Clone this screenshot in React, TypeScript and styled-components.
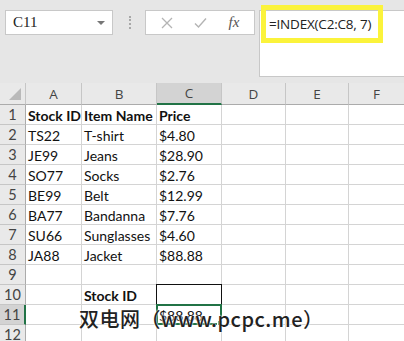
import * as React from "react";
import styled, { createGlobalStyle } from "styled-components";

const GlobalStyle = createGlobalStyle`
  html, body {
    margin: 0;
    padding: 0;
    background: #e6e6e6;
  }
`;

const Page = styled.div`
  position: relative;
  width: 404px;
  height: 341px;
  overflow: hidden;
  background: #e6e6e6;
  font-family: Lato, "Liberation Sans", sans-serif;
`;

const TopBar = styled.div`
  display: flex;
  align-items: flex-start;
  height: 75px;
  padding: 10px 0 0 5px;
  box-sizing: border-box;
`;

const NameBox = styled.div`
  position: relative;
  width: 108px;
  height: 25px;
  box-sizing: border-box;
  background: #fff;
  border: 1px solid #c8c8c8;
  display: flex;
  align-items: center;
  padding-left: 7px;
  font-family: "Liberation Serif", serif;
  font-size: 15px;
  color: #222;
`;

const DropArrow = styled.span`
  position: absolute;
  right: 7px;
  top: 10px;
  width: 0;
  height: 0;
  border-left: 4px solid transparent;
  border-right: 4px solid transparent;
  border-top: 4px solid #777;
`;

const Grip = styled.div`
  width: 0;
  height: 13px;
  margin: 6px 14px 0 16px;
  border-left: 2px dotted #a8a8a8;
`;

const FxButtons = styled.div`
  width: 110px;
  height: 25px;
  box-sizing: border-box;
  background: #fff;
  border: 1px solid #c8c8c8;
  display: flex;
  align-items: center;
  justify-content: space-around;
  padding: 0 4px;
`;

const FxLabel = styled.span`
  font-family: "Liberation Serif", serif;
  font-style: italic;
  font-size: 15px;
  color: #555;
`;

const FormulaBar = styled.div`
  flex: 1;
  height: 65px;
  margin-left: 4px;
  background: #fff;
  border: 1px solid #c8c8c8;
  border-right: none;
`;

const Highlight = styled.div`
  position: absolute;
  left: 261px;
  top: 5px;
  width: 122px;
  height: 38px;
  box-sizing: border-box;
  border: 5px solid #fbf33b;
  display: flex;
  align-items: center;
  padding-left: 3px;
  white-space: nowrap;
  font-family: "Open Sans", sans-serif;
  font-size: 13.5px;
  letter-spacing: -0.2px;
  color: #222;
`;

const Grid = styled.div`
  margin-top: 8px;
  display: grid;
  grid-template-columns: 26px 56px 75px 65px 64px 63px 56px;
  grid-template-rows: 22px repeat(12, 20px);
`;

const Corner = styled.div`
  background: #e9e9e9;
  border-right: 1px solid #c6c6c6;
  border-bottom: 1px solid #ababab;
  box-sizing: border-box;
  display: flex;
  align-items: flex-end;
  justify-content: flex-end;
  padding: 0 4px 4px 0;
`;

const ColHead = styled.div<{ $active?: boolean }>`
  box-sizing: border-box;
  background: ${(p) => (p.$active ? "#d3d3d3" : "#e9e9e9")};
  border-right: 1px solid #c6c6c6;
  border-bottom: ${(p) => (p.$active ? "2px solid #217346" : "1px solid #ababab")};
  display: flex;
  align-items: center;
  justify-content: center;
  font-family: "Open Sans", sans-serif;
  font-size: 13.5px;
  color: #444;
`;

const RowHead = styled.div<{ $active?: boolean }>`
  box-sizing: border-box;
  background: ${(p) => (p.$active ? "#d3d3d3" : "#e9e9e9")};
  border-right: ${(p) => (p.$active ? "2px solid #217346" : "1px solid #ababab")};
  border-bottom: 1px solid #c6c6c6;
  display: flex;
  align-items: center;
  justify-content: center;
  font-size: 14.5px;
  color: #444;
`;

const Cell = styled.div<{ $bold?: boolean }>`
  position: relative;
  box-sizing: border-box;
  background: #fff;
  border-right: 1px solid #d4d4d4;
  border-bottom: 1px solid #d4d4d4;
  padding: 1px 0 0 2px;
  display: flex;
  align-items: center;
  white-space: nowrap;
  font-size: 14px;
  font-weight: ${(p) => (p.$bold ? 700 : 400)};
  color: #111;
`;

const CellBox = styled.div<{ $tone: "black" | "green" }>`
  position: absolute;
  pointer-events: none;
  left: -1px;
  right: -1px;
  top: -1px;
  bottom: -1px;
  border: ${(p) => (p.$tone === "green" ? "2px solid #217346" : "1px solid #111")};
`;

const Handle = styled.div`
  position: absolute;
  right: -4px;
  bottom: -4px;
  width: 5px;
  height: 5px;
  background: #217346;
  border: 1px solid #fff;
`;

const Watermark = styled.div`
  position: absolute;
  left: 79px;
  top: 304px;
  font-family: "Noto Sans CJK SC", "Liberation Sans", sans-serif;
  font-size: 20px;
  font-weight: 500;
  letter-spacing: 0.5px;
  color: #222;
  text-shadow: 0 0 2px #fff, 0 0 2px #fff;
  white-space: nowrap;
`;

const columns = ["A", "B", "C", "D", "E", "F"];

const rows: string[][] = [
  ["Stock ID", "Item Name", "Price"],
  ["TS22", "T-shirt", "$4.80"],
  ["JE99", "Jeans", "$28.90"],
  ["SO77", "Socks", "$2.76"],
  ["BE99", "Belt", "$12.99"],
  ["BA77", "Bandanna", "$7.76"],
  ["SU66", "Sunglasses", "$4.60"],
  ["JA88", "Jacket", "$88.88"],
  [],
  ["", "Stock ID", ""],
  ["", "", "$88.88"],
  [],
];

export default function App() {
  return (
    <Page>
      <GlobalStyle />
      <TopBar>
        <NameBox>
          C11
          <DropArrow />
        </NameBox>
        <Grip />
        <FxButtons>
          <svg width="12" height="12" viewBox="0 0 12 12">
            <path d="M1 1L11 11M11 1L1 11" stroke="#b4b4b4" strokeWidth="1.3" />
          </svg>
          <svg width="13" height="12" viewBox="0 0 13 12">
            <path d="M1 6.5L4.5 10L12 1.5" stroke="#b4b4b4" strokeWidth="1.4" fill="none" />
          </svg>
          <FxLabel>fx</FxLabel>
        </FxButtons>
        <FormulaBar />
      </TopBar>
      <Highlight>=INDEX(C2:C8, 7)</Highlight>

      <Grid>
        <Corner>
          <svg width="12" height="12" viewBox="0 0 12 12">
            <path d="M12 0L12 12L0 12Z" fill="#b9b9b9" />
          </svg>
        </Corner>
        {columns.map((c) => (
          <ColHead key={c} $active={c === "C"}>
            {c}
          </ColHead>
        ))}
        {rows.map((row, r) => (
          <React.Fragment key={r}>
            <RowHead $active={r === 10}>{r + 1}</RowHead>
            {columns.map((c, ci) => (
              <Cell key={c} $bold={r === 0 || (r === 9 && ci === 1)}>
                {row[ci] || ""}
                {r === 9 && ci === 2 && <CellBox $tone="black" />}
                {r === 10 && ci === 2 && (
                  <CellBox $tone="green">
                    <Handle />
                  </CellBox>
                )}
              </Cell>
            ))}
          </React.Fragment>
        ))}
      </Grid>

      <Watermark>双电网（www.pcpc.me）</Watermark>
    </Page>
  );
}
